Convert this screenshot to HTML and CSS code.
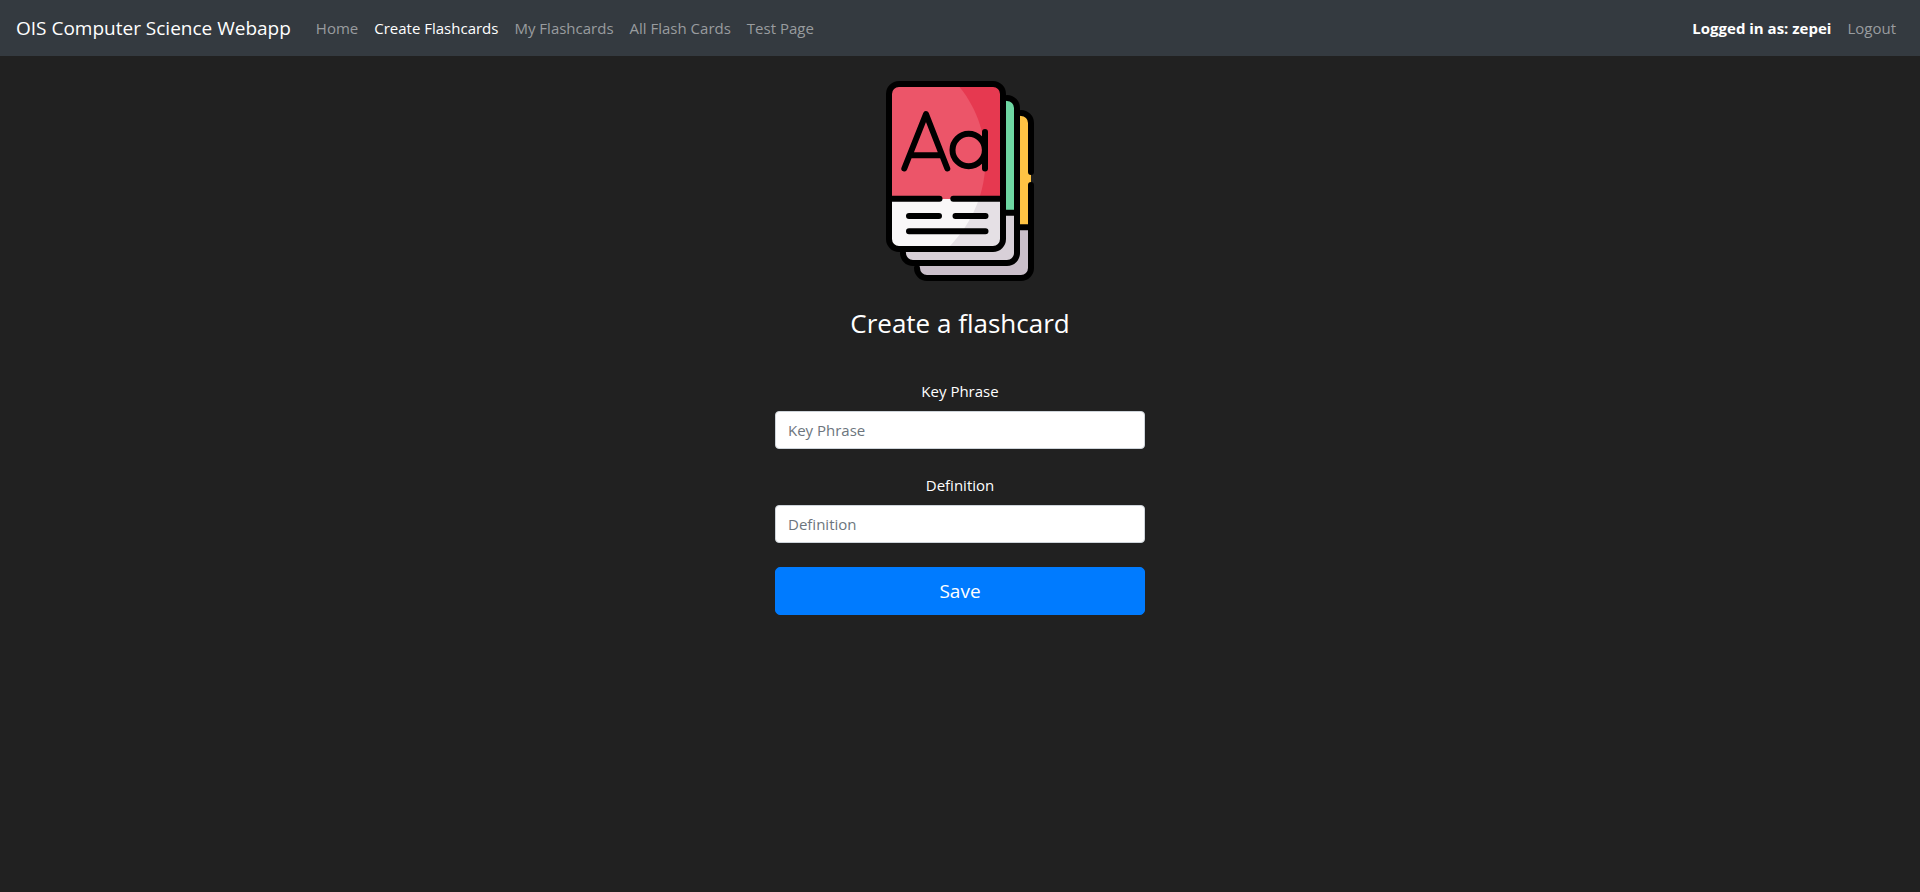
FILE: index.html
```html
<!DOCTYPE html>
<html lang="en">
<head>
  <meta charset="utf-8">
  <meta name="viewport" content="width=device-width, initial-scale=1">
  <title>Create Flashcards</title>
  <link rel="stylesheet" href="styles.css">
</head>
<body>
  <nav class="navbar">
    <a class="navbar-brand" href="#">OIS Computer Science Webapp</a>
    <ul class="nav-list">
      <li><a class="nav-link" href="#">Home</a></li>
      <li><a class="nav-link active" href="#">Create Flashcards</a></li>
      <li><a class="nav-link" href="#">My Flashcards</a></li>
      <li><a class="nav-link" href="#">All Flash Cards</a></li>
      <li><a class="nav-link" href="#">Test Page</a></li>
    </ul>
    <ul class="nav-list nav-user">
      <li><a class="nav-link active user-name" href="#">Logged in as: zepei</a></li>
      <li><a class="nav-link" href="#">Logout</a></li>
    </ul>
  </nav>
  <main class="page">
    <form class="card-form">
      <svg class="logo" viewBox="0 0 200 200" aria-hidden="true">
        <defs>
          <clipPath id="front"><rect x="29" y="3" width="114" height="165" rx="10"/></clipPath>
          <clipPath id="middle"><rect x="43" y="17" width="114" height="165" rx="10"/></clipPath>
          <clipPath id="back"><rect x="57" y="32" width="114" height="165" rx="10"/></clipPath>
          <clipPath id="shine"><path d="M29 3H97C135 46 138 118 87 168H29z"/></clipPath>
        </defs>
        <g fill="none" stroke="#000" stroke-width="6" stroke-linecap="round" stroke-linejoin="round">
          <g clip-path="url(#back)" stroke="none">
            <path fill="#ffc344" d="M57 32h114v114H57z"/>
            <path fill="#cabfca" d="M57 146h114v51H57z"/>
          </g>
          <path d="M171 91V42a10 10 0 0 0-10-10M171 104v83a10 10 0 0 1-10 10H67a10 10 0 0 1-10-10M157 146.300h14"/>
          <g clip-path="url(#middle)" stroke="none">
            <path fill="#6dd6a2" d="M43 17h114v115H43z"/>
            <path fill="#d8d0d8" d="M43 132h114v50H43z"/>
          </g>
          <path d="M147 17a10 10 0 0 1 10 10v145a10 10 0 0 1-10 10H53a10 10 0 0 1-10-10M143 131.700h14"/>
          <g clip-path="url(#front)" stroke="none">
            <path fill="#e63950" d="M29 3h114v115H29z"/>
            <path fill="#e5e0e5" d="M29 118h114v50H29z"/>
            <g clip-path="url(#shine)">
              <path fill="#ec5569" d="M29 3h114v115H29z"/>
              <path fill="#f9f7f8" d="M29 118h114v50H29z"/>
            </g>
          </g>
          <rect x="29" y="3" width="114" height="165" rx="10"/>
          <path d="M29 117.700H79.500M93.300 117.700H143M49 135H79M95.500 135H125.500M49 150.300H125.500"/>
          <path d="M44.300 87.500L66 33L87.300 87.500M50 74.300H82"/>
          <circle cx="108.700" cy="69" r="16.200"/>
          <path d="M125 51V87.500"/>
        </g>
      </svg>
      <h1 class="title">Create a flashcard</h1>
      <div class="field">
        <label for="phrase">Key Phrase</label>
        <input id="phrase" type="text" placeholder="Key Phrase">
      </div>
      <div class="field">
        <label for="definition">Definition</label>
        <input id="definition" type="text" placeholder="Definition">
      </div>
      <button class="save" type="submit">Save</button>
    </form>
  </main>
</body>
</html>
```
FILE: styles.css
```css
* {
  box-sizing: border-box;
}

body {
  margin: 0;
  background: #212121;
  color: #fff;
  font: 15px/24px "Open Sans", "Noto Sans", sans-serif;
}

.navbar {
  display: flex;
  align-items: center;
  min-height: 56px;
  padding: 8px 16px;
  background: #343a40;
}

.navbar-brand {
  margin-right: 17px;
  color: #fff;
  font-size: 19px;
  line-height: 30px;
  text-decoration: none;
  white-space: nowrap;
}

.nav-list {
  display: flex;
  margin: 0;
  padding: 0;
  list-style: none;
}

.nav-user {
  margin-left: auto;
}

.nav-link {
  display: block;
  padding: 8px;
  color: #999c9f;
  text-decoration: none;
  white-space: nowrap;
}

.nav-link.active {
  color: #fff;
}

.user-name {
  font-weight: 700;
}

.page {
  padding: 25px 16px;
}

.card-form {
  display: flex;
  flex-direction: column;
  gap: 24px;
  max-width: 370px;
  margin: 0 auto;
  text-align: center;
}

.logo {
  width: 200px;
  height: 200px;
  align-self: center;
}

.title {
  margin: 0 0 14px;
  font-size: 26px;
  font-weight: 400;
  line-height: 36px;
}

.field {
  display: flex;
  flex-direction: column;
  gap: 8px;
}

.field input {
  width: 100%;
  height: 38px;
  padding: 6px 12px;
  border: 1px solid #ced4da;
  border-radius: 4px;
  background: #fff;
  color: #495057;
  font: inherit;
}

.field input::placeholder {
  color: #6c757d;
  opacity: 1;
}

.save {
  width: 100%;
  padding: 8px 16px;
  border: 1px solid #007bff;
  border-radius: 5px;
  background: #007bff;
  color: #fff;
  font-family: inherit;
  font-size: 19px;
  line-height: 30px;
}
```
